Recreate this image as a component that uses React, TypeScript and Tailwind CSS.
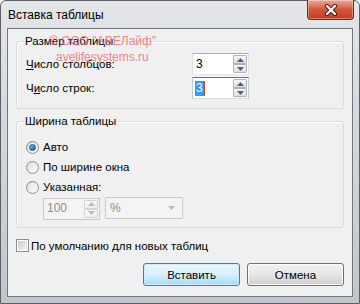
import React from 'react';

const font = "font-['Liberation_Sans','Noto_Sans',sans-serif]";

function Arrow({ up, disabled }: { up?: boolean; disabled?: boolean }) {
  return (
    <svg width="7" height="4" viewBox="0 0 7 4">
      <path
        d={up ? 'M0 4 L3.5 0 L7 4 Z' : 'M0 0 L3.5 4 L7 0 Z'}
        fill={disabled ? '#b8bcc2' : '#4d6185'}
      />
    </svg>
  );
}

function Spin({
  value,
  focused,
  disabled,
}: {
  value: string;
  focused?: boolean;
  disabled?: boolean;
}) {
  const box = focused
    ? 'border-[#3d7bad] border-l-[#b5cfe7] border-r-[#b5cfe7] border-b-[#c6dcef] bg-white'
    : disabled
      ? 'border-[#c7cacc] bg-[#f4f4f4]'
      : 'border-[#abadb3] border-l-[#dbdfe6] border-r-[#dbdfe6] border-b-[#e3e9ef] bg-white';
  const btn = disabled
    ? 'border-[#d2d4d6] from-[#f7f7f7] to-[#eeeeee]'
    : 'border-[#b4b4b4] from-[#f6f6f6] to-[#dedede]';
  return (
    <div className={`flex h-[22px] w-[57px] items-stretch border ${box}`}>
      <div className="flex flex-1 items-center pl-[2px] text-[12px] leading-[15px]">
        {focused ? (
          <span className="flex items-center">
            <span className="bg-[#3399ff] px-[1px] text-white">{value}</span>
            <span className="h-[15px] w-[1px] bg-[#c0471c]" />
          </span>
        ) : (
          <span className={disabled ? 'pl-[1px] text-[#8d8d8d]' : 'pl-[1px] text-black'}>
            {value}
          </span>
        )}
      </div>
      <div className="mr-[1px] flex w-[14px] flex-col justify-center py-[1px]">
        <div
          className={`flex h-[9px] items-center justify-center rounded-[1px] border bg-gradient-to-b ${btn}`}
        >
          <Arrow up disabled={disabled} />
        </div>
        <div
          className={`flex h-[9px] items-center justify-center rounded-[1px] border bg-gradient-to-b ${btn}`}
        >
          <Arrow disabled={disabled} />
        </div>
      </div>
    </div>
  );
}

function Radio({ checked, label }: { checked?: boolean; label: string }) {
  return (
    <div className="flex h-[20px] items-center gap-[4px]">
      <span className="flex h-[13px] w-[13px] items-center justify-center rounded-full border border-[#8e8f8f] bg-gradient-to-br from-[#d6d6d6] to-[#ffffff]">
        <span className="flex h-[9px] w-[9px] items-center justify-center rounded-full bg-gradient-to-br from-[#e4e4e4] to-[#f8f8f8]">
          {checked && (
            <span className="h-[7px] w-[7px] rounded-full border border-[#1d5f8f] bg-gradient-to-br from-[#7ec3ef] to-[#0f5a92]" />
          )}
        </span>
      </span>
      <span className="leading-[16px] text-black">{label}</span>
    </div>
  );
}

function Group({
  title,
  className,
  children,
}: {
  title: string;
  className: string;
  children: React.ReactNode;
}) {
  return (
    <div
      className={`relative rounded-[3px] border border-[#d5dfe5] shadow-[inset_1px_1px_0_#ffffff] ${className}`}
    >
      <span className="absolute left-[7px] top-[-9px] bg-[#f0f0f0] px-[1px] leading-[16px] text-black">
        {title}
      </span>
      {children}
    </div>
  );
}

export default function App() {
  return (
    <div
      className={`flex h-[304px] w-[360px] flex-col rounded-t-[6px] border border-[#5d6166] bg-gradient-to-b from-[#e4e6e9] via-[#d2d5d9] to-[#c2c6ca] px-[6px] pb-[6px] text-[11.5px] ${font}`}
    >
      <div className="flex h-[27px] items-start justify-between">
        <span className="pl-[1px] pt-[6px] text-[12px] leading-[17px] text-black">
          Вставка таблицы
        </span>
        <div className="-mr-[1px] -mt-[1px] flex h-[20px] w-[47px] items-center justify-center rounded-b-[4px] border border-t-0 border-[#6b2a1c] bg-gradient-to-b from-[#e9a99b] via-[#d3563a] to-[#c43a1d] shadow-[inset_0_0_0_1px_rgba(255,255,255,0.35)]">
          <svg width="14" height="12" viewBox="0 0 14 12">
            <path d="M3 2 L11 10 M11 2 L3 10" stroke="#3b1a14" strokeWidth="4.2" strokeLinecap="round" />
            <path d="M3 2 L11 10 M11 2 L3 10" stroke="#ffffff" strokeWidth="2.4" strokeLinecap="round" />
          </svg>
        </div>
      </div>

      <div className="relative flex flex-1 flex-col border border-[#6e767e] bg-[#f0f0f0] px-[8px]">
        <div className="pointer-events-none absolute left-[41px] top-[4px] z-10 text-[12px] leading-[16px] text-[#f06a6a] opacity-80">
          <div>© ООО "АВЕЛайф"</div>
          <div className="pl-[7px]">avelifesystems.ru</div>
        </div>

        <Group title="Размер таблицы" className="mt-[12px] flex flex-col gap-[2px] pb-[9px] pl-[9px] pt-[11px]">
          <div className="flex h-[22px] items-center">
            <span className="w-[166px] leading-[16px] text-black">
              <span className="underline">Ч</span>исло столбцов:
            </span>
            <Spin value="3" />
          </div>
          <div className="flex h-[22px] items-center">
            <span className="w-[166px] leading-[16px] text-black">
              Ч<span className="underline">и</span>сло строк:
            </span>
            <Spin value="3" focused />
          </div>
        </Group>

        <Group title="Ширина таблицы" className="mt-[12px] flex flex-col pb-[8px] pl-[9px] pt-[15px]">
          <Radio checked label="Авто" />
          <Radio label="По ширине окна" />
          <Radio label="Указанная:" />
          <div className="flex items-center gap-[5px] pl-[17px]">
            <div className="h-[21px]">
              <Spin value="100" disabled />
            </div>
            <div className="flex h-[22px] w-[78px] items-center justify-between rounded-[2px] border border-[#c7cacc] bg-[#f4f4f4] pl-[4px] pr-[7px]">
              <span className="text-[12px] leading-[16px] text-[#8d8d8d]">%</span>
              <svg width="7" height="4" viewBox="0 0 7 4">
                <path d="M0 0 L3.5 4 L7 0 Z" fill="#b8bcc2" />
              </svg>
            </div>
          </div>
        </Group>

        <div className="mt-[11px] flex h-[13px] items-center gap-[2px]">
          <span className="flex h-[13px] w-[13px] items-center justify-center border border-[#8e8f8f] bg-white">
            <span className="h-[9px] w-[9px] bg-gradient-to-br from-[#cbcbcb] to-[#f6f6f6]" />
          </span>
          <span className="leading-[16px] text-black">По умолчанию для новых таблиц</span>
        </div>

        <div className="mt-[11px] flex justify-end gap-[7px]">
          <button className="flex h-[23px] w-[97px] items-center justify-center rounded-[3px] border border-[#3c7fb1] bg-gradient-to-b from-[#eaf6fd] via-[#d9f0fc] to-[#a7d9f5] leading-[16px] text-black shadow-[inset_0_0_0_1px_#c6f0ff]">
            Вставить
          </button>
          <button className="flex h-[23px] w-[97px] items-center justify-center rounded-[3px] border border-[#707070] bg-gradient-to-b from-[#f2f2f2] via-[#e6e6e6] to-[#cfcfcf] leading-[16px] text-black shadow-[inset_0_0_0_1px_#fcfcfc]">
            Отмена
          </button>
        </div>
      </div>
    </div>
  );
}
